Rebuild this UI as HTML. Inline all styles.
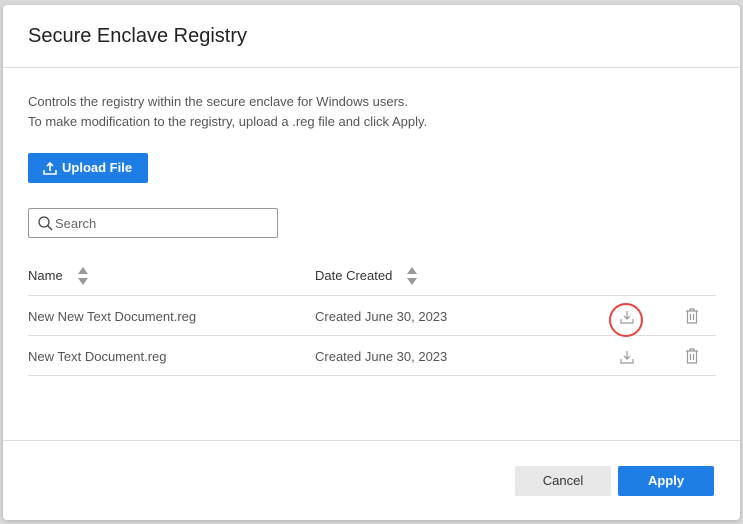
<!DOCTYPE html>
<html><head><style>
body{margin:0;width:743px;height:524px;background:#d9d9d9;font-family:"Liberation Sans",sans-serif;position:relative;overflow:hidden}
.m{position:absolute;left:3px;top:5px;width:737px;height:515px;background:#fff;border-radius:4px;box-shadow:0 1px 4px rgba(0,0,0,.2)}
.a{position:absolute}
h1{position:absolute;left:25px;top:20px;margin:0;font-weight:normal;font-size:20px;color:#222}
.t{font-size:13px;color:#555}
.hr{position:absolute;left:25px;width:688px;height:1px;background:#ddd}
</style></head><body>
<div class="m">
<h1>Secure Enclave Registry</h1>
<div class="a" style="left:0;top:62px;width:737px;height:1px;background:#ddd"></div>
<div class="a t" style="left:25px;top:87px;line-height:20px">Controls the registry within the secure enclave for Windows users.<br>To make modification to the registry, upload a .reg file and click Apply.</div>
<div class="a" style="left:25px;top:148px;width:120px;height:30px;background:#1f7de6;border-radius:2px;color:#fff;font-weight:bold;font-size:13px;line-height:30px">
<svg style="position:absolute;left:15px;top:8px" width="14" height="14" viewBox="0 0 14 14" fill="none" stroke="#fff" stroke-width="1.6"><path d="M7 10V2M4 5l3-3 3 3M1 9v4h12V9"/></svg>
<span style="position:absolute;left:34px">Upload File</span></div>
<div class="a" style="left:25px;top:203px;width:248px;height:28px;border:1px solid #999;border-radius:2px">
<svg style="position:absolute;left:9px;top:7px" width="15" height="15" viewBox="0 0 15 15" fill="none" stroke="#444" stroke-width="1.3"><circle cx="6" cy="6" r="5"/><path d="M9.5 9.5l4.5 4.5"/></svg>
<span class="t" style="position:absolute;left:26px;top:7px;color:#666">Search</span></div>
<div class="a t" style="left:25px;top:263px;color:#333">Name</div>
<svg class="a" style="left:74px;top:261px" width="12" height="20" viewBox="0 0 12 20" fill="#999"><path d="M1 8l5-7 5 7zM1 12l5 7 5-7z"/></svg>
<div class="a t" style="left:312px;top:263px;color:#333">Date Created</div>
<svg class="a" style="left:403px;top:261px" width="12" height="20" viewBox="0 0 12 20" fill="#999"><path d="M1 8l5-7 5 7zM1 12l5 7 5-7z"/></svg>
<div class="hr" style="top:290px"></div>
<div class="a t" style="left:25px;top:304px">New New Text Document.reg</div>
<div class="a t" style="left:312px;top:304px">Created June 30, 2023</div>
<div class="hr" style="top:330px"></div>
<div class="a t" style="left:25px;top:344px">New Text Document.reg</div>
<div class="a t" style="left:312px;top:344px">Created June 30, 2023</div>
<div class="hr" style="top:370px"></div>
<div class="a" style="left:606px;top:298px;width:34px;height:34px;border:2px solid #e8453c;border-radius:50%;box-sizing:border-box"></div>
<svg class="a" style="left:617px;top:305px" width="14" height="14" viewBox="0 0 14 14" fill="none" stroke="#999" stroke-width="1.2"><path d="M7 1v8M4 6l3 3 3-3M1 9v4h12V9"/></svg>
<svg class="a" style="left:617px;top:345px" width="14" height="14" viewBox="0 0 14 14" fill="none" stroke="#999" stroke-width="1.2"><path d="M7 1v8M4 6l3 3 3-3M1 9v4h12V9"/></svg>
<svg class="a" style="left:682px;top:303px" width="14" height="16" viewBox="0 0 14 16" fill="none" stroke="#999" stroke-width="1.2"><path d="M1 3h12M5 3V1h4v2M2.5 3v12h9V3M5.5 6v6M8.5 6v6"/></svg>
<svg class="a" style="left:682px;top:343px" width="14" height="16" viewBox="0 0 14 16" fill="none" stroke="#999" stroke-width="1.2"><path d="M1 3h12M5 3V1h4v2M2.5 3v12h9V3M5.5 6v6M8.5 6v6"/></svg>
<div class="a" style="left:0;top:435px;width:737px;height:1px;background:#ddd"></div>
<div class="a" style="left:512px;top:461px;width:96px;height:30px;background:#e8e8e8;border-radius:2px;text-align:center;line-height:30px;font-size:13px;color:#333">Cancel</div>
<div class="a" style="left:615px;top:461px;width:96px;height:30px;background:#1f7de6;border-radius:2px;text-align:center;line-height:30px;font-size:13px;color:#fff;font-weight:bold">Apply</div>
</div>
</body></html>
